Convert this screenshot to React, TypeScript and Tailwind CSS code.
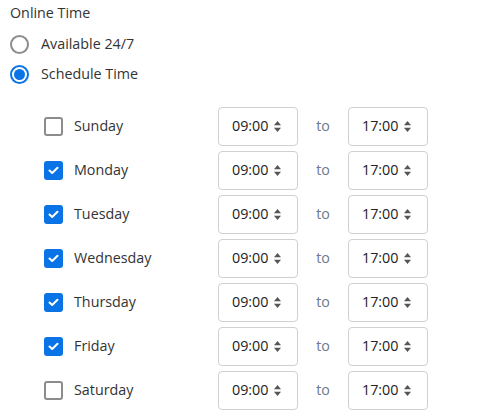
const days = [
  { name: "Sunday", on: false },
  { name: "Monday", on: true },
  { name: "Tuesday", on: true },
  { name: "Wednesday", on: true },
  { name: "Thursday", on: true },
  { name: "Friday", on: true },
  { name: "Saturday", on: false },
];

function Radio({ checked }: { checked: boolean }) {
  return checked ? (
    <span className="w-[19px] h-[19px] rounded-full border-2 border-[#0a74e6] flex items-center justify-center shrink-0">
      <span className="w-[11px] h-[11px] rounded-full bg-[#0a74e6]" />
    </span>
  ) : (
    <span className="w-[19px] h-[19px] rounded-full border-2 border-[#8c8c8c] shrink-0" />
  );
}

function Checkbox({ checked }: { checked: boolean }) {
  return checked ? (
    <span className="w-[19px] h-[19px] rounded-[3px] bg-[#0a74e6] flex items-center justify-center shrink-0">
      <svg width="11" height="9" viewBox="0 0 11 9" fill="none">
        <path d="M1.5 4.5 L4.2 7 L9.5 1.8" stroke="white" strokeWidth="2" strokeLinecap="round" strokeLinejoin="round" />
      </svg>
    </span>
  ) : (
    <span className="w-[19px] h-[19px] rounded-[3px] border-2 border-[#8c8c8c] shrink-0" />
  );
}

function TimeSelect({ value }: { value: string }) {
  return (
    <div className="w-[80px] h-[39px] border border-[#d0d0d0] rounded-[4px] flex items-center pl-[13px] gap-[6px] text-[#222]">
      <span>{value}</span>
      <svg width="7" height="11" viewBox="0 0 7 11" fill="#555">
        <path d="M3.5 0 L7 4.3 L0 4.3 Z" />
        <path d="M0 6.7 L7 6.7 L3.5 11 Z" />
      </svg>
    </div>
  );
}

export default function App() {
  return (
    <div className="pl-[10px] pt-[2px] text-[14.3px] text-[#333] font-['Open_Sans',sans-serif]">
      <div className="leading-[22px]">Online Time</div>

      <div className="mt-[5px]">
        <label className="flex items-center gap-[12px] h-[30px]">
          <Radio checked={false} />
          <span>Available 24/7</span>
        </label>
        <label className="flex items-center gap-[12px] h-[30px]">
          <Radio checked={true} />
          <span>Schedule Time</span>
        </label>
      </div>

      <div className="mt-[15px] pl-[34px]">
        {days.map((d) => (
          <div key={d.name} className="flex items-center h-[44px]">
            <div className="flex items-center gap-[11px] w-[174px]">
              <Checkbox checked={d.on} />
              <span>{d.name}</span>
            </div>
            <TimeSelect value="09:00" />
            <span className="w-[50px] text-center text-[#6b7a90]">to</span>
            <TimeSelect value="17:00" />
          </div>
        ))}
      </div>
    </div>
  );
}
